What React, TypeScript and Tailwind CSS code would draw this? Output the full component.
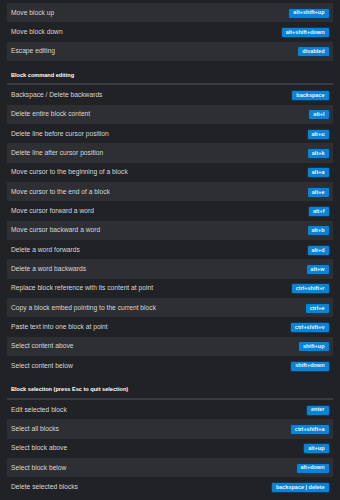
const TOP: [string, string][] = [
  ["", "ctrl+shift+z"],
  ["Move block up", "alt+shift+up"],
  ["Move block down", "alt+shift+down"],
  ["Escape editing", "disabled"],
];

const EDITING: [string, string][] = [
  ["Backspace / Delete backwards", "backspace"],
  ["Delete entire block content", "alt+l"],
  ["Delete line before cursor position", "alt+u"],
  ["Delete line after cursor position", "alt+k"],
  ["Move cursor to the beginning of a block", "alt+a"],
  ["Move cursor to the end of a block", "alt+e"],
  ["Move cursor forward a word", "alt+f"],
  ["Move cursor backward a word", "alt+b"],
  ["Delete a word forwards", "alt+d"],
  ["Delete a word backwards", "alt+w"],
  ["Replace block reference with its content at point", "ctrl+shift+r"],
  ["Copy a block embed pointing to the current block", "ctrl+e"],
  ["Paste text into one block at point", "ctrl+shift+v"],
  ["Select content above", "shift+up"],
  ["Select content below", "shift+down"],
];

const SELECTION: [string, string][] = [
  ["Edit selected block", "enter"],
  ["Select all blocks", "ctrl+shift+a"],
  ["Select block above", "alt+up"],
  ["Select block below", "alt+down"],
  ["Delete selected blocks", "backspace | delete"],
];

function Key({ label }: { label: string }) {
  return (
    <span className="mt-[1px] flex h-[11px] items-center rounded-[2px] border border-[#10385a] bg-[#0883d6] px-[4px] text-[5.5px] font-bold leading-none text-[#eef5fc]">
      {label}
    </span>
  );
}

function Table({ rows }: { rows: [string, string][] }) {
  return (
    <div className="flex flex-col">
      {rows.map(([name, key], i) => (
        <div
          key={i}
          className={
            "flex h-[19.33px] items-center justify-between pl-[4px] pr-[3.5px] " +
            (i % 2 === 1 ? "bg-[#2e2f33]" : "")
          }
        >
          <span className="text-[6.7px] text-[#d6d7d9]">{name}</span>
          <Key label={key} />
        </div>
      ))}
    </div>
  );
}

function Heading({ title }: { title: string }) {
  return (
    <div className="flex h-[24.5px] items-center border-b-2 border-[#3a3b40] pl-[4px] pt-[5px] text-[5.6px] font-bold text-white">
      {title}
    </div>
  );
}

export default function App() {
  return (
    <div
      className="h-[500px] w-[340px] overflow-hidden bg-[#212226] px-[7px]"
      style={{ fontFamily: '"Liberation Sans", Arial, sans-serif' }}
    >
      <div className="-mt-[16.33px]">
        <Table rows={TOP} />
      </div>
      <Heading title="Block command editing" />
      <Table rows={EDITING} />
      <Heading title="Block selection (press Esc to quit selection)" />
      <Table rows={SELECTION} />
    </div>
  );
}
